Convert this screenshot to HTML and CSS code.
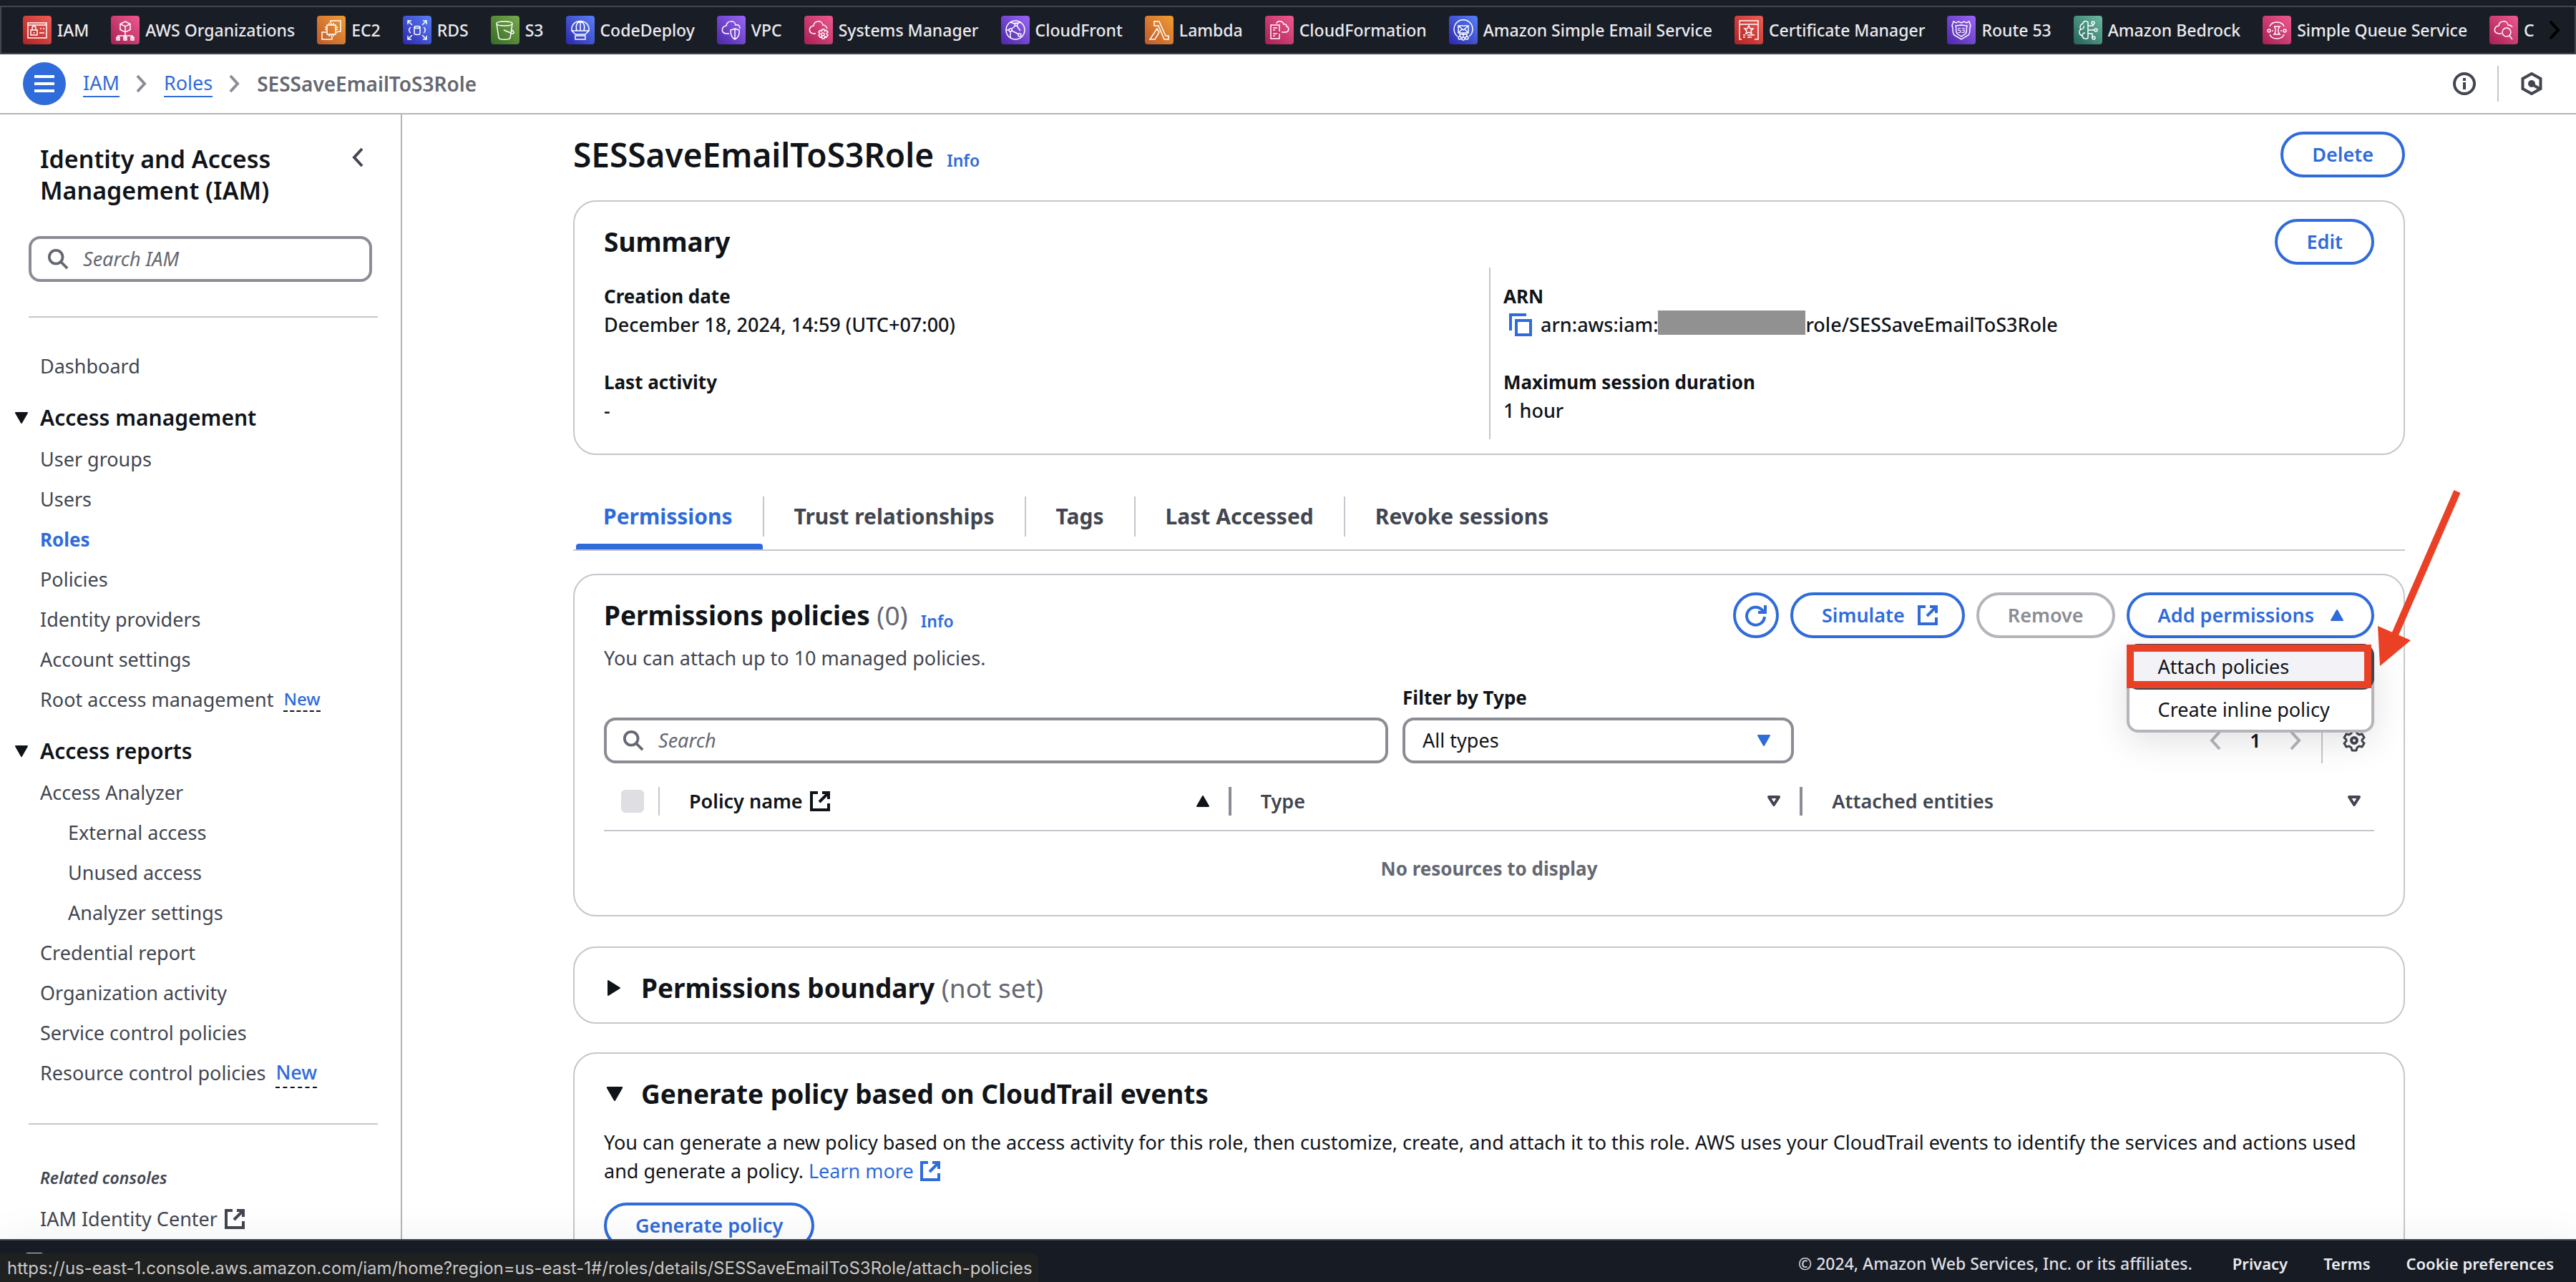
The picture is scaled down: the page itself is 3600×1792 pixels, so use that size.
FILE: index.html
```html
<!DOCTYPE html>
<html lang="en">
<head>
<meta charset="utf-8">
<title>SESSaveEmailToS3Role | IAM</title>
<link rel="stylesheet" href="styles.css">
</head>
<body>
<svg class="symbols" aria-hidden="true">
  <symbol id="external" viewBox="0 0 32 32"><path d="M13 4H4v24h24v-9M19 4h9v9M28 4 15 17" fill="none" stroke="currentColor" stroke-width="4"/></symbol>
  <symbol id="search" viewBox="0 0 32 32"><circle cx="13" cy="13" r="10" fill="none" stroke="currentColor" stroke-width="4"/><path d="m20 20 10 10" fill="none" stroke="currentColor" stroke-width="4"/></symbol>
  <symbol id="caret-down" viewBox="0 0 20 16"><path d="M2 1h16L10 15z" fill="currentColor" stroke="currentColor" stroke-width="2" stroke-linejoin="round"/></symbol>
  <symbol id="caret-up" viewBox="0 0 20 16"><path d="M2 15h16L10 1z" fill="currentColor" stroke="currentColor" stroke-width="2" stroke-linejoin="round"/></symbol>
  <symbol id="caret-open" viewBox="0 0 20 16"><path d="M3 2h14l-7 11z" fill="none" stroke="currentColor" stroke-width="4" stroke-linejoin="round"/></symbol>
  <symbol id="chevron-right" viewBox="0 0 32 32"><path d="m10 4 11 12-11 12" fill="none" stroke="currentColor" stroke-width="4"/></symbol>
  <symbol id="chevron-left" viewBox="0 0 32 32"><path d="M22 4 11 16l11 12" fill="none" stroke="currentColor" stroke-width="4"/></symbol>
</svg>

<header class="topbar">
  <nav class="favorites">
    <ul class="favorites-list">
      <li><a href="#"><svg class="tile red" viewBox="0 0 40 40"><path d="M7 10h26v21H7zM7 13h26M11 20h9v7h-9zM13 20v-3a2 2 0 0 1 5 0v3M15.500 23v2M24 18h2M28 18h2M23 24h7"/></svg>IAM</a></li>
      <li><a href="#"><svg class="tile pink" viewBox="0 0 40 40"><path d="m20 8 7 3.500v8L20 23l-7-3.500v-8zM13 11.500l7 3.500 7-3.500M20 15v8M20 23v5M10 33v-5h20v5M20 28v5M8 30h4v4H8zM18 30h4v4h-4zM28 30h4v4h-4z"/></svg>AWS Organizations</a></li>
      <li><a href="#"><svg class="tile orange" viewBox="0 0 40 40"><path d="M14 13h12v13H14zM17 10v3M20 10v3M23 10v3M17 26v3M20 26v3M23 26v3M11 16h3M11 19h3M11 23h3M26 16h3M26 19h3M26 23h3M19 10V7h14v15h-4M12 23H7v10h14v-4"/></svg>EC2</a></li>
      <li><a href="#"><svg class="tile blue" viewBox="0 0 40 40"><path d="M7 12V7h5M7 7l6 6M28 7h5v5M33 7l-6 6M7 28v5h5M7 33l6-6M28 33h5v-5M33 33l-6-6M16 16v9c0 2 8 2 8 0v-9M16 16c0-2 8-2 8 0s-8 2-8 0M11 16c-3 2-3 6 0 8M29 16c3 2 3 6 0 8"/></svg>RDS</a></li>
      <li><a href="#"><svg class="tile green" viewBox="0 0 40 40"><path d="M8 11c0-4 22-4 22 0s-22 4-22 0l3 20c1 3 15 3 16 0l3-20M18 20l12 5c3 0 3-3-1-5"/></svg>S3</a></li>
      <li><a href="#"><svg class="tile blue" viewBox="0 0 40 40"><path d="M8 21C6 3 34 3 32 21zM8 21l5 5h14l5-5M20 8v13M15 21C13 14 15 9 20 8c5 1 7 6 5 13M13 28h14v5H13z"/></svg>CodeDeploy</a></li>
      <li><a href="#"><svg class="tile purple" viewBox="0 0 40 40"><path d="M17 25h-4c-8-1-7-10 0-11 1-8 12-8 13-1 5-1 6 2 6 5M25 18l6 2c1 8-2 11-6 13-4-2-6-5-6-13zM25 18v15"/></svg>VPC</a></li>
      <li><a href="#"><svg class="tile pink" viewBox="0 0 40 40"><path d="M16 25h-3c-8-1-7-10 0-11 1-8 12-8 13-1 4 0 5 2 6 5"/><circle cx="26" cy="26" r="2"/><path d="M25 19h3l.500 2.500 2.500-1 2 2.500-2 2 2 2-2 3-2.500-1L28 32h-3l-.500-3-2.500 1-2-3 2-2-2-2 2-2.500 2.500 1z"/></svg>Systems Manager</a></li>
      <li><a href="#"><svg class="tile purple" viewBox="0 0 40 40"><circle cx="20" cy="20" r="13"/><circle cx="21" cy="12" r="2"/><circle cx="13" cy="20" r="2"/><circle cx="26" cy="27" r="2"/><path d="M13 9c6 3 10 2 15 0M20 14l-6 5M22 14l5 7M15 21l10 5M7 20h4M13 22v9"/></svg>CloudFront</a></li>
      <li><a href="#"><svg class="tile orange" viewBox="0 0 40 40"><path d="M13 8h7l9 20h4v5h-6l-8-19h-6zM17 18l3 5-6 10H7z"/></svg>Lambda</a></li>
      <li><a href="#"><svg class="tile pink" viewBox="0 0 40 40"><path d="M20 25v7H8V13h12v9M11 17h6M11 20h3M11 25h6M11 28h3M16 11c1-5 9-4 10 1 3-1 4 1 4 3 4 1 4 8-2 8h-5"/></svg>CloudFormation</a></li>
      <li><a href="#"><svg class="tile blue" viewBox="0 0 40 40"><path d="M12 29a13 13 0 1 1 16 0M13 14h14v10H13zM13 14l7 6 7-6M13 24l5-5M27 24l-5-5M20 24v6M15 29v-3h10v3"/><circle cx="15" cy="31" r="2"/><circle cx="20" cy="32" r="2"/><circle cx="25" cy="31" r="2"/></svg>Amazon Simple Email Service</a></li>
      <li><a href="#"><svg class="tile red" viewBox="0 0 40 40"><path d="M10 33H7V7h26v26h-5M7 12h26M20 14l2 4h4l-3 3 1 4-4-2-4 2 1-4-3-3h4zM12 27h3M18 27h10M12 30h3M18 30h6"/></svg>Certificate Manager</a></li>
      <li><a href="#"><svg class="tile purple" viewBox="0 0 40 40"><path d="m9 8 4 2 3-2 4 2 4-2 3 2 4-2 2 6c-3 5 1 8-3 13l-10 6-10-6c-4-5 0-8-3-13zM12 14l8-1 8 1c-2 5 1 7-2 11l-6 4-6-4c-3-4 0-6-2-11z"/><text x="20" y="24">53</text></svg>Route 53</a></li>
      <li><a href="#"><svg class="tile teal" viewBox="0 0 40 40"><path d="M20 9c-3-3-7-1-7 2-4 1-5 5-3 8-4 3-2 8 2 9 1 5 6 5 8 3zM10 19c3 0 5-2 4-5M12 28c0-3 2-4 4-4M20 14h7v-2M20 20h9M20 25h6v6"/><circle cx="27" cy="10" r="2"/><circle cx="31" cy="20" r="2"/><circle cx="28" cy="31" r="2"/></svg>Amazon Bedrock</a></li>
      <li><a href="#"><svg class="tile pink" viewBox="0 0 40 40"><path d="M10 15c3-8 17-8 20 0M10 26c3 8 17 8 20 0M16 15h8c-3 3-3 8 0 11h-8c3-3 3-8 0-11"/><circle cx="9" cy="21" r="2"/><circle cx="31" cy="21" r="2"/><path d="M13 21h2M25 21h2"/></svg>Simple Queue Service</a></li>
      <li><a href="#"><svg class="tile pink" viewBox="0 0 40 40"><path d="M17 25h-4c-8-1-7-10 0-11 1-8 12-8 13-1 4 0 5 1 6 3"/><circle cx="24" cy="23" r="6"/><path d="m28 28 4 5"/></svg>C</a></li>
    </ul>
    <button class="favorites-next" type="button"><svg viewBox="0 0 32 32"><use href="#chevron-right"/></svg></button>
  </nav>
</header>

<div class="crumb-bar">
  <button class="menu-button" type="button"><svg viewBox="0 0 28 24"><path d="M0 2h28M0 12h28M0 22h28" stroke="#fff" stroke-width="4"/></svg></button>
  <nav class="crumbs">
    <a href="#">IAM</a>
    <svg viewBox="0 0 16 26"><path d="m2 2 10 11L2 24" fill="none" stroke="#8c8c94" stroke-width="4"/></svg>
    <a href="#">Roles</a>
    <svg viewBox="0 0 16 26"><path d="m2 2 10 11L2 24" fill="none" stroke="#8c8c94" stroke-width="4"/></svg>
    <span>SESSaveEmailToS3Role</span>
  </nav>
  <div class="tools">
    <button type="button"><svg viewBox="0 0 32 32"><circle cx="16" cy="16" r="14" fill="none" stroke="currentColor" stroke-width="4"/><path d="M16 8v4M16 14v10" stroke="currentColor" stroke-width="4"/></svg></button>
    <button type="button"><svg viewBox="0 0 32 32"><path d="m16 2 12.500 7v14L16 30 3.500 23V9z" fill="none" stroke="currentColor" stroke-width="4"/><circle cx="16" cy="16" r="5" fill="currentColor"/><path d="m17 17 10 6" stroke="currentColor" stroke-width="4"/></svg></button>
  </div>
</div>

<div class="layout">
  <aside class="sidebar">
    <div class="sidebar-head">
      <h2>Identity and Access Management (IAM)</h2>
      <button type="button"><svg viewBox="0 0 32 32"><use href="#chevron-left"/></svg></button>
    </div>
    <label class="search-box sidebar-search"><svg viewBox="0 0 32 32"><use href="#search"/></svg><input type="search" placeholder="Search IAM"></label>
    <hr>
    <nav class="side-nav">
      <a href="#">Dashboard</a>
      <h3><svg viewBox="0 0 20 16"><use href="#caret-down"/></svg>Access management</h3>
      <a href="#">User groups</a>
      <a href="#">Users</a>
      <a class="current" href="#">Roles</a>
      <a href="#">Policies</a>
      <a href="#">Identity providers</a>
      <a href="#">Account settings</a>
      <a href="#">Root access management <span class="new small">New</span></a>
      <h3><svg viewBox="0 0 20 16"><use href="#caret-down"/></svg>Access reports</h3>
      <a href="#">Access Analyzer</a>
      <a class="nested" href="#">External access</a>
      <a class="nested" href="#">Unused access</a>
      <a class="nested" href="#">Analyzer settings</a>
      <a href="#">Credential report</a>
      <a href="#">Organization activity</a>
      <a href="#">Service control policies</a>
      <a href="#">Resource control policies <span class="new">New</span></a>
    </nav>
    <hr>
    <nav class="side-nav">
      <h4>Related consoles</h4>
      <a class="outside" href="#">IAM Identity Center <svg viewBox="0 0 32 32"><use href="#external"/></svg></a>
    </nav>
  </aside>

  <main class="page">
    <div class="content">
      <div class="page-head">
        <h1>SESSaveEmailToS3Role</h1>
        <a class="info" href="#">Info</a>
        <button class="btn push" type="button">Delete</button>
      </div>

      <section class="card summary">
        <div class="card-head">
          <h2>Summary</h2>
          <button class="btn push" type="button">Edit</button>
        </div>
        <div class="summary-grid">
          <dl>
            <div><dt>Creation date</dt><dd>December 18, 2024, 14:59 (UTC+07:00)</dd></div>
            <div><dt>Last activity</dt><dd>-</dd></div>
          </dl>
          <dl>
            <div><dt>ARN</dt><dd class="arn"><button type="button"><svg viewBox="0 0 32 32"><path d="M2 24V2h22M10 10h20v20H10z" fill="none" stroke="currentColor" stroke-width="4"/></svg></button><span>arn:aws:iam:</span><span class="redacted"></span><span>role/SESSaveEmailToS3Role</span></dd></div>
            <div><dt>Maximum session duration</dt><dd>1 hour</dd></div>
          </dl>
        </div>
      </section>

      <div class="tabs" role="tablist">
        <button class="active" role="tab" type="button">Permissions</button>
        <button role="tab" type="button">Trust relationships</button>
        <button role="tab" type="button">Tags</button>
        <button role="tab" type="button">Last Accessed</button>
        <button role="tab" type="button">Revoke sessions</button>
      </div>

      <section class="card policies">
        <div class="card-head">
          <h2>Permissions policies <span class="muted">(0)</span></h2>
          <a class="info" href="#">Info</a>
          <div class="actions push">
            <button class="btn round" type="button"><svg viewBox="0 0 32 32"><path d="M28 18a12.500 12.500 0 1 1-3-9l3 3M29 2v10H19" fill="none" stroke="currentColor" stroke-width="4"/></svg></button>
            <button class="btn with-icon" type="button">Simulate<svg viewBox="0 0 32 32"><use href="#external"/></svg></button>
            <button class="btn" type="button" disabled>Remove</button>
            <div class="dropdown">
              <button class="btn with-icon" type="button" aria-expanded="true">Add permissions<svg class="caret" viewBox="0 0 20 16"><use href="#caret-up"/></svg></button>
              <ul class="menu">
                <li class="highlighted"><a href="#">Attach policies</a></li>
                <li><a href="#">Create inline policy</a></li>
                <li class="marker" aria-hidden="true"></li>
              </ul>
              <svg class="arrow" viewBox="0 0 120 250" aria-hidden="true"><path d="M116 3 29 203" stroke="#ea4025" stroke-width="10"/><path d="m5 191 46 20-43 36z" fill="#ea4025"/></svg>
            </div>
          </div>
        </div>
        <p class="description">You can attach up to 10 managed policies.</p>
        <div class="filters">
          <label class="search-box"><svg viewBox="0 0 32 32"><use href="#search"/></svg><input type="search" placeholder="Search"></label>
          <div class="field">
            <label for="type-filter">Filter by Type</label>
            <div class="select-box">
              <select id="type-filter"><option>All types</option></select>
              <svg class="caret" viewBox="0 0 20 16"><use href="#caret-down"/></svg>
            </div>
          </div>
          <div class="pagination">
            <button type="button" disabled><svg viewBox="0 0 32 32"><use href="#chevron-left"/></svg></button>
            <button class="page-number" type="button">1</button>
            <button type="button" disabled><svg viewBox="0 0 32 32"><use href="#chevron-right"/></svg></button>
            <button class="settings" type="button"><svg viewBox="0 0 32 32"><path d="M13 2h6l1 4 3 2 4-1 3 5-3 3v2l3 3-3 5-4-1-3 2-1 4h-6l-1-4-3-2-4 1-3-5 3-3v-2l-3-3 3-5 4 1 3-2z" fill="none" stroke="currentColor" stroke-width="3" stroke-linejoin="round"/><circle cx="16" cy="16" r="4" fill="none" stroke="currentColor" stroke-width="4"/></svg></button>
          </div>
        </div>
        <table>
          <colgroup><col class="check-col"><col><col><col></colgroup>
          <thead>
            <tr>
              <th><div class="th check"><input type="checkbox" disabled></div></th>
              <th><div class="th sorted">Policy name<svg class="ext" viewBox="0 0 32 32"><use href="#external"/></svg><svg class="caret push" viewBox="0 0 20 16"><use href="#caret-up"/></svg></div></th>
              <th><div class="th">Type<svg class="caret push" viewBox="0 0 20 16"><use href="#caret-open"/></svg></div></th>
              <th><div class="th last">Attached entities<svg class="caret push" viewBox="0 0 20 16"><use href="#caret-open"/></svg></div></th>
            </tr>
          </thead>
          <tbody><tr><td colspan="4">No resources to display</td></tr></tbody>
        </table>
      </section>

      <section class="card expandable">
        <h2><svg class="closed" viewBox="0 0 20 24"><path d="M1 2v20l16-10z" fill="currentColor" stroke="currentColor" stroke-width="2" stroke-linejoin="round"/></svg><span>Permissions boundary <span class="muted">(not set)</span></span></h2>
      </section>

      <section class="card expandable generate">
        <h2><svg viewBox="0 0 20 16"><use href="#caret-down"/></svg>Generate policy based on CloudTrail events</h2>
        <p>You can generate a new policy based on the access activity for this role, then customize, create, and attach it to this role. AWS uses your CloudTrail events to identify the services and actions used and generate a policy. <a href="#">Learn more <svg viewBox="0 0 32 32"><use href="#external"/></svg></a></p>
        <button class="btn" type="button">Generate policy</button>
      </section>
    </div>
  </main>
</div>

<footer class="footer">
  <svg class="shell" viewBox="0 0 30 30"><rect x="2" y="2" width="26" height="26" rx="4" fill="none" stroke="#d9d9e0" stroke-width="4"/></svg>
  <span class="copyright">© 2024, Amazon Web Services, Inc. or its affiliates.</span>
  <a href="#">Privacy</a>
  <a href="#">Terms</a>
  <a href="#">Cookie preferences</a>
</footer>
<div class="status">https://us-east-1.console.aws.amazon.com/iam/home?region=us-east-1#/roles/details/SESSaveEmailToS3Role/attach-policies</div>
</body>
</html>
```
FILE: styles.css
```css
:root {
  --blue: #2f6bda;
  --ink: #101419;
  --body: #424650;
  --muted: #656871;
  --field: #8c8c94;
  --line: #c6c6cd;
  --edge: #b4b4bb;
  --bar: #191d25;
  --bar-line: #424650;
}
* { box-sizing: border-box; }
body {
  margin: 0;
  height: 100vh;
  display: flex;
  flex-direction: column;
  overflow: hidden;
  background: #fff;
  color: var(--ink);
  font: 400 27px/40px "Noto Sans", "Open Sans", sans-serif;
}
h1, h2, h3, h4, p, ul, dl, dd { margin: 0; padding: 0; }
ul { list-style: none; }
a { color: var(--blue); text-decoration: none; }
button { padding: 0; border: 0; background: none; color: inherit; font: inherit; cursor: pointer; }
button svg { display: block; width: 32px; height: 32px; }
hr { border: 0; border-top: 2px solid var(--line); }
.symbols { position: absolute; width: 0; height: 0; }
.push { margin-left: auto; }
.muted { color: var(--muted); font-weight: 400; }

/* Favourites bar */
.topbar { flex: none; padding-top: 8px; background: var(--bar); }
.favorites {
  display: flex;
  align-items: center;
  height: 68px;
  padding: 0 12px 0 30px;
  border: 2px solid var(--bar-line);
}
.favorites-list { flex: 1; display: flex; gap: 31px; overflow: hidden; }
.favorites-list a {
  display: flex;
  align-items: center;
  gap: 8px;
  color: #ebebf0;
  font-size: 23px;
  font-weight: 500;
  white-space: nowrap;
}
.favorites-next { color: #000; }
.tile { flex: none; width: 40px; height: 40px; border-radius: 4px; fill: none; stroke: #fff; stroke-width: 1.500; }
.tile text { fill: #fff; stroke: none; font-size: 9px; text-anchor: middle; }
.red { background: linear-gradient(45deg, #b02222, #ee5c55); }
.pink { background: linear-gradient(45deg, #a81f55, #ef5a8f); }
.orange { background: linear-gradient(45deg, #c0592b, #ef9d35); }
.blue { background: linear-gradient(45deg, #2e27ad, #5780f5); }
.green { background: linear-gradient(45deg, #356b22, #78a850); }
.purple { background: linear-gradient(45deg, #4c27a8, #9a66f5); }
.teal { background: linear-gradient(45deg, #23635a, #6eb9a0); }

/* Breadcrumbs */
.crumb-bar {
  flex: none;
  display: flex;
  align-items: center;
  gap: 24px;
  height: 84px;
  padding: 0 46px 0 32px;
  border-bottom: 2px solid var(--edge);
}
.menu-button { display: grid; place-items: center; width: 60px; height: 60px; border-radius: 50%; background: var(--blue); }
.menu-button svg { width: 28px; height: 24px; }
.crumbs { display: flex; align-items: center; gap: 23px; font-size: 27px; }
.crumbs svg { width: 16px; height: 26px; }
.crumbs a { border-bottom: 2px solid var(--blue); line-height: 36px; }
.crumbs span { color: var(--muted); font-size: 28px; font-weight: 600; }
.tools { display: flex; margin-left: auto; color: var(--body); }
.tools button + button { margin-left: 30px; padding: 9px 0 9px 30px; border-left: 2px solid var(--line); }

/* Sidebar */
.layout { flex: 1; display: flex; min-height: 0; }
.sidebar {
  flex: none;
  width: 562px;
  padding: 40px 32px 0 40px;
  border-right: 2px solid var(--edge);
  overflow: hidden;
}
.sidebar-head { display: flex; align-items: start; justify-content: space-between; padding: 0 12px 0 16px; }
.sidebar-head h2 { width: 360px; font-size: 34px; font-weight: 600; line-height: 44px; }
.sidebar-head button { padding-top: 4px; color: var(--body); }
.search-box {
  display: flex;
  align-items: center;
  gap: 20px;
  height: 64px;
  padding: 0 22px;
  border: 4px solid var(--field);
  border-radius: 16px;
}
.search-box svg { flex: none; width: 30px; height: 30px; color: var(--muted); }
.search-box input { flex: 1; min-width: 0; padding: 0; border: 0; outline: 0; background: none; font: inherit; }
.search-box input::placeholder { color: var(--muted); font-style: italic; opacity: 1; }
.sidebar-search { margin: 42px 8px 48px 0; }
.sidebar hr { margin: 0; }
.side-nav { padding: 40px 0 42px 16px; }
.side-nav a { display: flex; align-items: center; gap: 14px; height: 56px; color: var(--body); }
.side-nav .current { color: var(--blue); font-weight: 700; font-size: 26px; }
.side-nav .nested { padding-left: 39px; }
.side-nav h3 { display: flex; align-items: center; gap: 16px; height: 60px; margin: 14px 0 0 -36px; font-size: 30px; font-weight: 600; }
.side-nav h3 svg { width: 20px; height: 16px; }
.side-nav h4 { height: 60px; margin-top: 4px; color: var(--body); font-size: 23px; font-style: italic; font-weight: 600; line-height: 60px; }
.side-nav .new { border-bottom: 2px dashed var(--ink); color: var(--blue); font-weight: 500; }
.side-nav .small { font-size: 24px; line-height: 32px; }
.side-nav .outside { gap: 8px; }
.outside svg { width: 32px; height: 32px; }

/* Page */
.page { position: relative; flex: 1; min-width: 0; overflow: hidden; }
.content { max-width: 2560px; margin: 0 auto; padding-top: 24px; }
.page-head, .card-head { display: flex; align-items: center; height: 64px; }
.page-head { margin-bottom: 32px; }
h1 { font-size: 46px; font-weight: 600; line-height: 64px; }
.info { align-self: flex-end; margin-left: 18px; padding-bottom: 4px; font-size: 23px; font-weight: 600; }
.card { padding: 24px 41px 0; border: 2px solid var(--line); border-radius: 32px; }
.card h2 { font-size: 37px; font-weight: 700; line-height: 48px; }
.card h2 .muted { font-weight: 400; }
.btn {
  display: inline-flex;
  align-items: center;
  height: 64px;
  padding: 0 40px;
  border: 4px solid var(--blue);
  border-radius: 32px;
  background: #fff;
  color: var(--blue);
  font-weight: 600;
  white-space: nowrap;
}
.btn:disabled { border-color: var(--edge); color: var(--field); }
.btn.round { padding: 0 12px; }
.btn.with-icon { gap: 16px; padding-right: 32px; }
.caret { width: 20px; height: 16px; }
.btn .caret { width: 20px; height: 16px; margin: 0 6px; }

.summary-grid { display: grid; grid-template-columns: 1fr 1fr; margin: 4px 0 20px; }
.summary-grid dl { display: grid; gap: 40px; padding: 20px 0; }
.summary-grid dl + dl { padding-left: 18px; border-left: 2px solid var(--line); }
dt { font-size: 26px; font-weight: 700; }
dd { font-weight: 500; }
.arn { display: flex; align-items: center; }
.arn button { margin: 0 12px 0 8px; color: var(--blue); }
.redacted { width: 206px; height: 34px; margin-bottom: 6px; background: #919191; }

.tabs { display: flex; margin-top: 42px; padding: 16px 0 18px; border-bottom: 2px solid var(--line); }
.tabs button { position: relative; height: 56px; padding: 0 42px; border-left: 2px solid var(--line); color: var(--body); font-size: 30px; font-weight: 700; }
.tabs .active { border-left: 0; color: var(--blue); }
.tabs .active::after { content: ""; position: absolute; left: 4px; right: 0; bottom: -18px; height: 8px; border-radius: 4px 4px 0 0; background: var(--blue); }

.policies { margin: 32px 0 42px; padding-bottom: 14px; }
.actions { display: flex; gap: 16px; }
.description { margin: 8px 0 15px; color: var(--body); }
.filters { display: grid; grid-template-columns: 1097fr 547fr 792fr; gap: 20px; align-items: end; }
.field { display: grid; gap: 8px; }
.field label { font-size: 26px; font-weight: 700; }
.select-box { display: grid; align-items: center; }
.select-box select {
  grid-area: 1 / 1;
  appearance: none;
  width: 100%;
  height: 64px;
  padding: 0 24px;
  border: 4px solid var(--field);
  border-radius: 16px;
  background: #fff;
  color: var(--ink);
  font: inherit;
}
.select-box .caret { grid-area: 1 / 1; justify-self: end; margin-right: 32px; color: var(--blue); pointer-events: none; }
.pagination { display: flex; align-items: center; justify-content: flex-end; gap: 24px; height: 64px; color: var(--body); }
.pagination button:disabled { color: var(--edge); }
.page-number { width: 32px; color: var(--ink); font-weight: 600; }
.pagination .settings { padding: 16px 12px 16px 28px; margin-left: -4px; border-left: 2px solid var(--line); }

.dropdown { position: relative; }
.menu {
  position: absolute;
  z-index: 2;
  top: 72px;
  left: 0;
  right: 0;
  border: 4px solid var(--edge);
  border-radius: 16px;
  background: #fff;
  box-shadow: 0 12px 50px rgba(0, 7, 22, .12);
}
.menu a { display: flex; align-items: center; height: 56px; padding: 0 40px; color: var(--ink); white-space: nowrap; }
.menu .highlighted { margin: -4px -4px 0; border: 4px solid var(--body); border-radius: 16px; background: #f3f3f7; }
.marker { position: absolute; top: -3px; left: -4px; right: 0; height: 61px; border: 10px solid #ea4025; }
.arrow { position: absolute; z-index: 3; left: 100%; top: -144px; width: 120px; height: 250px; fill: none; }

table { width: 100%; margin-top: 13px; border-collapse: collapse; table-layout: fixed; }
.check-col { width: 78px; }
th { padding: 20px 0; border-bottom: 2px solid var(--line); text-align: left; }
.th { display: flex; align-items: center; height: 40px; padding: 0 26px 0 41px; border-right: 4px solid var(--field); color: var(--body); font-weight: 600; white-space: nowrap; }
.th.check { padding: 0 0 0 24px; border-right: 2px solid var(--line); }
.th.sorted { color: var(--ink); }
.th.last { padding-right: 18px; border-right: 0; }
.th .ext { width: 32px; height: 32px; margin-left: 8px; }
.th input { appearance: none; width: 32px; height: 32px; margin: 0; border-radius: 6px; background: #dedee3; }
td { height: 104px; padding: 0; color: var(--muted); font-size: 26px; font-weight: 700; text-align: center; }

.expandable { margin-bottom: 40px; padding: 32px 41px 24px; }
.expandable h2 { display: flex; align-items: center; gap: 24px; }
.expandable h2 svg { width: 26px; height: 20px; }
.expandable h2 .closed { height: 24px; }
.expandable h2 > svg { margin-left: 2px; }
.generate p { margin: 24px 0; }
.generate p svg { width: 32px; height: 32px; vertical-align: -6px; }

/* Footer */
.footer {
  position: relative;
  flex: none;
  display: flex;
  align-items: center;
  height: 60px;
  gap: 50px;
  padding: 6px 31px 0 33px;
  border-top: 2px solid var(--bar-line);
  background: #161b24;
  box-shadow: 0 -8px 50px rgba(0, 7, 22, .05);
  color: #dedee3;
  font-size: 23px;
}
.footer a { color: #ebebf0; font-size: 22px; font-weight: 600; }
.copyright { margin: 0 6px 0 auto; font-weight: 500; }
.shell { width: 30px; height: 30px; }
.status {
  position: fixed;
  z-index: 5;
  left: 0;
  bottom: 0;
  height: 40px;
  padding: 0 8px 0 10px;
  border-radius: 0 8px 0 0;
  background: #1f2020;
  color: #c8c8c8;
  font: 24px/42px Inter, sans-serif;
}
```
